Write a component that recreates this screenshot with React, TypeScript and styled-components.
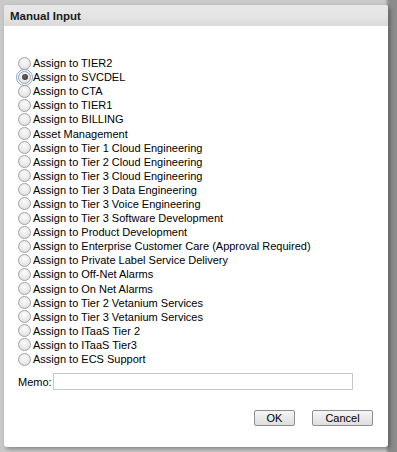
import { useState } from 'react';
import styled, { createGlobalStyle } from 'styled-components';

const GlobalStyle = createGlobalStyle`
  html, body {
    margin: 0;
    padding: 0;
    background: #c6c6c6;
    font-family: "Liberation Sans", Arial, sans-serif;
  }
`;

const Backdrop = styled.div`
  width: 397px;
  height: 452px;
  padding: 5px 0 0 4px;
  box-sizing: border-box;
  overflow: hidden;
  background: linear-gradient(to right, #c9c9c9 0, #c9c9c9 385px, #8c8c8c 389px);
`;

const Dialog = styled.div`
  width: 384px;
  height: 442px;
  background: #fff;
  border-radius: 3px;
  box-shadow: 2px 2px 4px rgba(0, 0, 0, 0.35);
  display: flex;
  flex-direction: column;
  overflow: hidden;
`;

const TitleBar = styled.div`
  height: 21px;
  padding-left: 6px;
  display: flex;
  align-items: center;
  background: linear-gradient(#e8e8e8, #e3e3e3 60%, #d9d9d9);
  font-size: 11.5px;
  font-weight: bold;
  color: #1a1a1a;
`;

const Body = styled.div`
  flex: 1;
  padding: 30px 0 0 14px;
  display: flex;
  flex-direction: column;
`;

const OptionList = styled.div`
  display: flex;
  flex-direction: column;
`;

const Option = styled.label`
  display: flex;
  align-items: center;
  height: 14.1px;
  font-size: 11px;
  color: #000;
`;

const Radio = styled.input`
  appearance: none;
  -webkit-appearance: none;
  box-sizing: border-box;
  width: 13px;
  height: 13px;
  margin: 0 2px 0 0;
  border: 1px solid #a2a2a2;
  border-radius: 50%;
  background: radial-gradient(circle at 50% 35%, #fbfbfb 0, #eaeaea 55%, #d6d6d6 100%);
  position: relative;

  &:checked::after {
    content: '';
    position: absolute;
    left: 2.5px;
    top: 2.5px;
    width: 6px;
    height: 6px;
    border-radius: 50%;
    background: radial-gradient(circle at 40% 40%, #6a6a6a, #262626);
  }

  &:checked {
    outline: 1px solid #7fa3d8;
    outline-offset: 1px;
  }
`;

const MemoRow = styled.div`
  display: flex;
  align-items: center;
  margin-top: 7px;
  font-size: 11px;
`;

const MemoInput = styled.input`
  width: 300px;
  height: 17px;
  box-sizing: border-box;
  margin-left: 1px;
  border: 1px solid #c8c8c8;
  font-size: 11px;
`;

const Footer = styled.div`
  display: flex;
  justify-content: flex-end;
  gap: 17px;
  padding: 20px 15px 0 0;
`;

const Button = styled.button<{ $w: number }>`
  width: ${(p) => p.$w}px;
  height: 16px;
  padding: 0;
  font-family: "Liberation Sans", Arial, sans-serif;
  font-size: 11px;
  color: #000;
  background: linear-gradient(#f6f6f6, #dedede);
  border: 1px solid #8e8e8e;
  border-radius: 2px;
`;

const options = [
  'Assign to TIER2',
  'Assign to SVCDEL',
  'Assign to CTA',
  'Assign to TIER1',
  'Assign to BILLING',
  'Asset Management',
  'Assign to Tier 1 Cloud Engineering',
  'Assign to Tier 2 Cloud Engineering',
  'Assign to Tier 3 Cloud Engineering',
  'Assign to Tier 3 Data Engineering',
  'Assign to Tier 3 Voice Engineering',
  'Assign to Tier 3 Software Development',
  'Assign to Product Development',
  'Assign to Enterprise Customer Care (Approval Required)',
  'Assign to Private Label Service Delivery',
  'Assign to Off-Net Alarms',
  'Assign to On Net Alarms',
  'Assign to Tier 2 Vetanium Services',
  'Assign to Tier 3 Vetanium Services',
  'Assign to ITaaS Tier 2',
  'Assign to ITaaS Tier3',
  'Assign to ECS Support',
];

export default function App() {
  const [selected, setSelected] = useState(1);

  return (
    <>
      <GlobalStyle />
      <Backdrop>
        <Dialog>
          <TitleBar>Manual Input</TitleBar>
          <Body>
            <OptionList>
              {options.map((o, i) => (
                <Option key={o}>
                  <Radio
                    type="radio"
                    name="assign"
                    checked={selected === i}
                    onChange={() => setSelected(i)}
                  />
                  {o}
                </Option>
              ))}
            </OptionList>
            <MemoRow>
              Memo:
              <MemoInput type="text" />
            </MemoRow>
            <Footer>
              <Button $w={41}>OK</Button>
              <Button $w={61}>Cancel</Button>
            </Footer>
          </Body>
        </Dialog>
      </Backdrop>
    </>
  );
}
